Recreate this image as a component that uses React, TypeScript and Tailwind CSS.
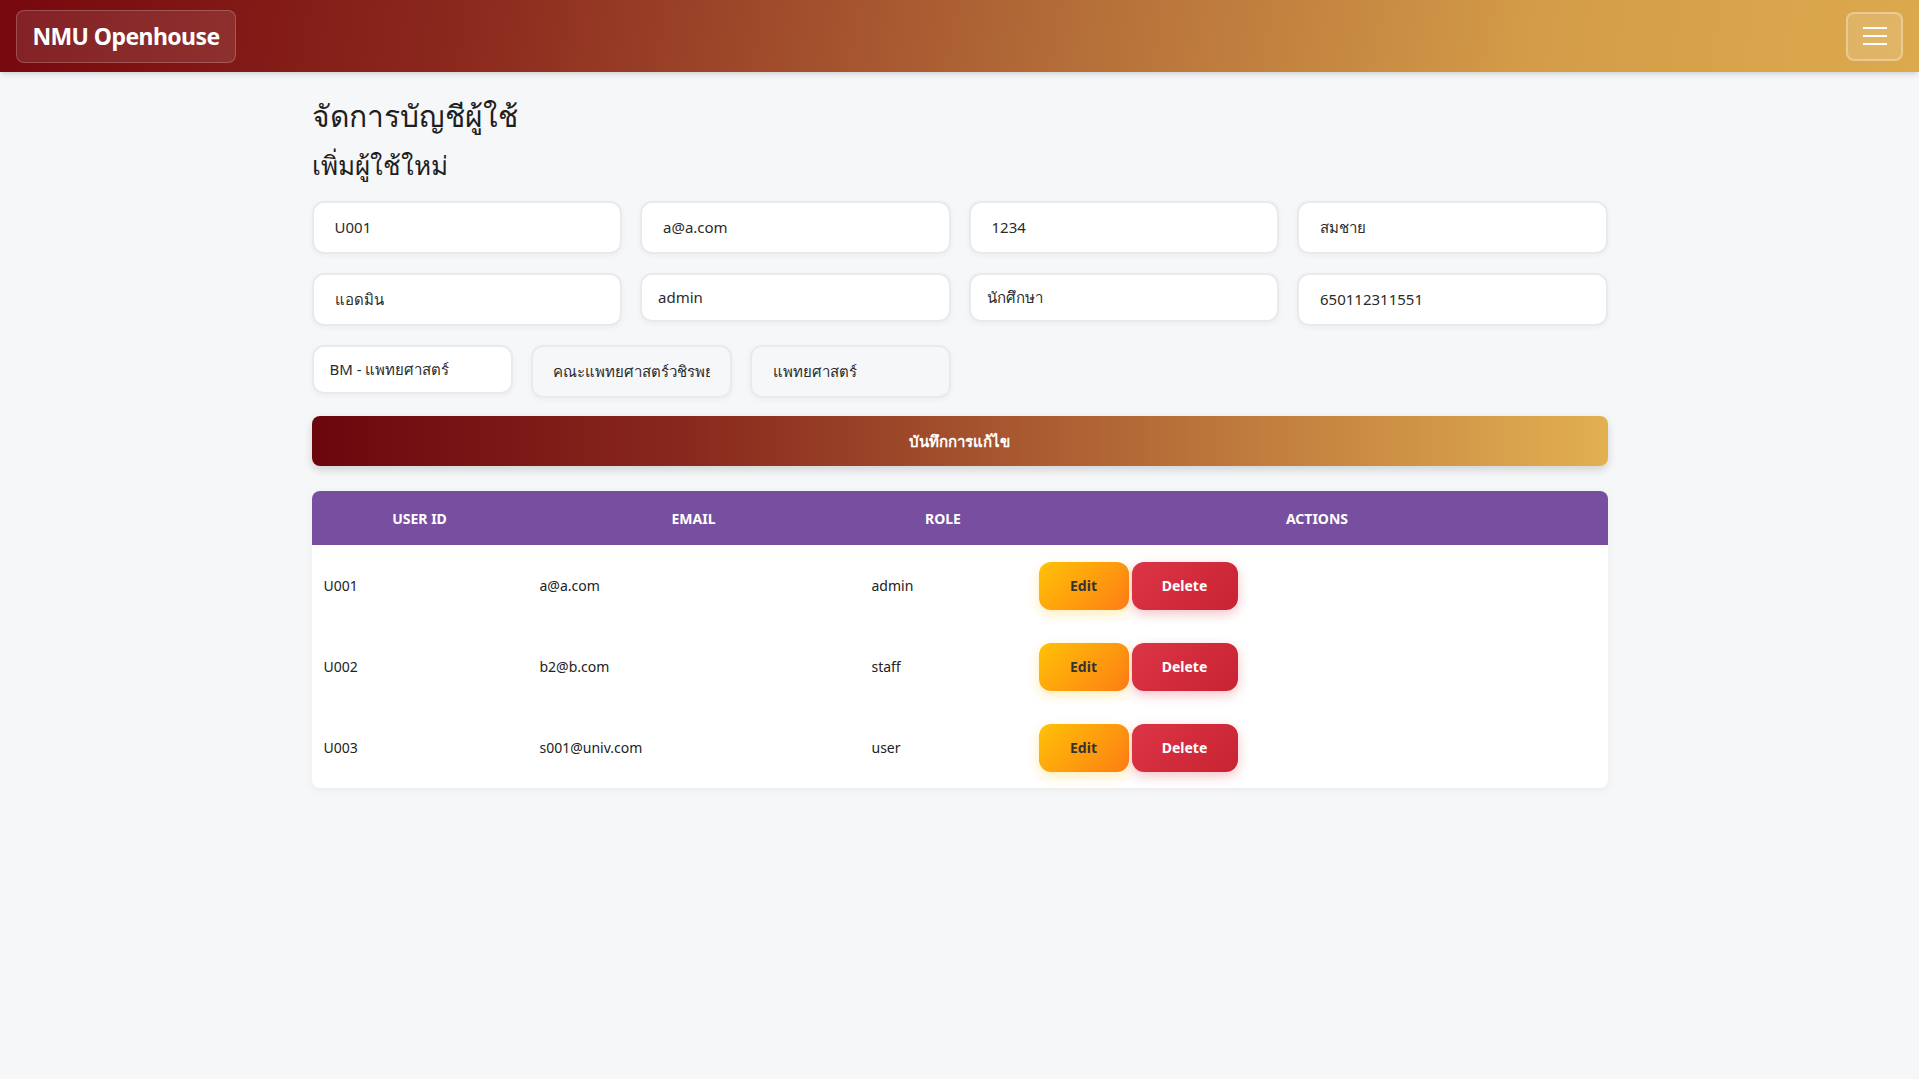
import React from 'react';

const users = [
  { id: 'U001', email: 'a@a.com', role: 'admin' },
  { id: 'U002', email: 'b2@b.com', role: 'staff' },
  { id: 'U003', email: 's001@univ.com', role: 'user' },
];

const Field: React.FC<{ value: string; span: string; h?: string; muted?: boolean; pad?: string }> = ({ value, span, h = 'h-[53px]', muted, pad = 'pl-[21px]' }) => (
  <div className={`${span} ${h} ${pad} pr-[20px] flex items-center rounded-xl border-2 border-[#e8eaee] shadow-[0_2px_6px_rgba(0,0,0,0.04)] text-[15px] text-[#2b2b2b] ${muted ? 'bg-[#f6f7f9]' : 'bg-white'}`}>
    <span className="block overflow-hidden whitespace-nowrap">{value}</span>
  </div>
);

export default function App() {
  return (
    <div className="min-h-screen bg-[#f6f7f9] font-['Noto_Sans','Liberation_Sans',sans-serif] text-[#222]">
      {/* Navbar */}
      <header className="h-[72px] bg-[linear-gradient(100deg,#76080e_0%,#8c2a1e_25%,#b36c38_55%,#d49c48_80%,#dca94d_100%)] flex items-center justify-between px-4 shadow-md">
        <div className="h-[53px] w-[220px] flex items-center justify-center rounded-lg bg-white/10 border border-white/20 text-white text-[23px] font-bold tracking-tight">
          NMU Openhouse
        </div>
        <button className="h-[49px] w-[57px] flex flex-col items-center justify-center gap-[6px] rounded-lg bg-white/15 border-2 border-white/30">
          <span className="block w-[24px] h-[2px] bg-white" />
          <span className="block w-[24px] h-[2px] bg-white" />
          <span className="block w-[24px] h-[2px] bg-white" />
        </button>
      </header>

      <main className="w-[1296px] mx-auto pt-[26px]">
        <h2 className="text-[30px] leading-[1.2] text-[#1f1f1f] mb-[16px]">จัดการบัญชีผู้ใช้</h2>
        <h3 className="text-[26px] leading-[1.2] text-[#1f1f1f] mb-[20px]">เพิ่มผู้ใช้ใหม่</h3>

        <div className="grid grid-cols-12 gap-x-[18px] gap-y-[19px] items-start">
          <Field span="col-span-3" value="U001" />
          <Field span="col-span-3" value="a@a.com" />
          <Field span="col-span-3" value="1234" />
          <Field span="col-span-3" value="สมชาย" />
          <Field span="col-span-3" value="แอดมิน" />
          <Field span="col-span-3" value="admin" h="h-[49px]" pad="pl-[16px]" />
          <Field span="col-span-3" value="นักศึกษา" h="h-[49px]" pad="pl-[16px]" />
          <Field span="col-span-3" value="650112311551" />
          <div className="col-span-12 grid grid-cols-12 gap-x-[18px]">
            <Field span="col-span-2" value="BM - แพทยศาสตร์" h="h-[49px]" pad="pl-[16px]" />
            <Field span="col-span-2" value="คณะแพทยศาสตร์วชิรพยาบาล" muted pad="pl-[20px]" />
            <Field span="col-span-2" value="แพทยศาสตร์" muted />
          </div>
        </div>

        <button className="mt-[18px] w-full h-[50px] rounded-lg bg-[linear-gradient(90deg,#6c060e_0%,#8a2a1e_30%,#b66d38_65%,#e2b051_100%)] text-white font-bold text-[15px] shadow-[0_4px_10px_rgba(0,0,0,0.15)]">
          บันทึกการแก้ไข
        </button>

        <div className="mt-[25px] rounded-lg bg-white overflow-hidden shadow-[0_2px_10px_rgba(0,0,0,0.05)]">
          <table className="w-full border-collapse">
            <thead>
              <tr className="bg-[#784ea0] text-white text-[14px] font-bold uppercase h-[54px]">
                <th className="w-[216px] text-center">User ID</th>
                <th className="w-[332px] text-center">Email</th>
                <th className="w-[167px] text-center">Role</th>
                <th className="text-center">Actions</th>
              </tr>
            </thead>
            <tbody>
              {users.map(u => (
                <tr key={u.id} className="h-[81px] text-[14px] text-[#222]">
                  <td className="px-3">{u.id}</td>
                  <td className="px-3">{u.email}</td>
                  <td className="px-3">{u.role}</td>
                  <td className="px-3">
                    <div className="flex gap-[3px]">
                      <button className="w-[90px] h-[48px] rounded-xl bg-[linear-gradient(135deg,#ffc107,#fd7e14)] text-[#333] font-bold text-[14px] shadow-[0_4px_12px_rgba(255,193,7,0.3)]">
                        Edit
                      </button>
                      <button className="w-[106px] h-[48px] rounded-xl bg-[linear-gradient(135deg,#dc3545,#c82333)] text-white font-bold text-[14px] shadow-[0_4px_12px_rgba(220,53,69,0.3)]">
                        Delete
                      </button>
                    </div>
                  </td>
                </tr>
              ))}
            </tbody>
          </table>
        </div>
      </main>
    </div>
  );
}
